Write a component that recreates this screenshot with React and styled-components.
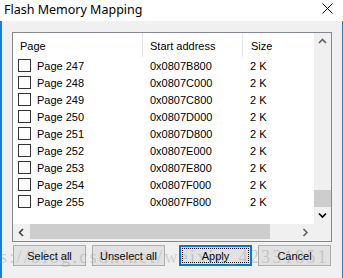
import React from "react";
import styled, { createGlobalStyle } from "styled-components";

const Global = createGlobalStyle`
  html, body { margin: 0; padding: 0; background: #f0f0f0; }
  body { width: 343px; height: 278px; overflow: hidden; }
`;

const Window = styled.div`
  position: relative;
  width: 343px;
  height: 278px;
  display: flex;
  flex-direction: column;
  background: #f0f0f0;
  font-family: "Liberation Sans", Arial, sans-serif;
  font-size: 11px;
  color: #000;
  overflow: hidden;
`;

const TitleBar = styled.div`
  height: 21px;
  flex: none;
  background: #fff;
  display: flex;
  align-items: center;
  justify-content: space-between;
  padding: 0 10px 0 4px;
`;

const Title = styled.div`
  font-family: "Noto Sans", "Noto Sans CJK SC", sans-serif;
  font-size: 12.5px;
  color: #000;
  line-height: 21px;
  margin-top: -3px;
`;

const Close = styled.svg`
  width: 11px;
  height: 11px;
  margin-top: -4px;
`;

const Body = styled.div`
  flex: 1;
  display: flex;
  flex-direction: column;
  border-left: 2px solid #1a82d6;
  border-right: 1px solid #1a82d6;
  padding: 11px 10px 0 10px;
`;

const ListBox = styled.div`
  height: 210px;
  box-sizing: border-box;
  border: 1px solid #828790;
  background: #fff;
  display: grid;
  grid-template-columns: 1fr 17px;
  grid-template-rows: 1fr 17px;
`;

const ListArea = styled.div`
  overflow: hidden;
`;

const Header = styled.div`
  height: 24px;
  display: grid;
  grid-template-columns: 130px 100px 1fr;
`;

const HeaderCell = styled.div`
  display: flex;
  align-items: center;
  padding-left: ${(p) => p.$pad}px;
  border-right: ${(p) => (p.$sep ? "1px solid #e5e5e5" : "none")};
  padding-top: 2px;
`;

const Row = styled.div`
  height: 17px;
  display: grid;
  grid-template-columns: 130px 100px 1fr;
  align-items: center;
`;

const Cell = styled.div`
  display: flex;
  align-items: center;
  padding-left: ${(p) => p.$pad}px;
  white-space: nowrap;
`;

const Check = styled.span`
  width: 13px;
  height: 13px;
  box-sizing: border-box;
  border: 1px solid #333;
  background: #fff;
  margin-right: 6px;
  flex: none;
`;

const VScroll = styled.div`
  background: #f0f0f0;
  display: flex;
  flex-direction: column;
`;

const HScroll = styled.div`
  background: #f0f0f0;
  display: flex;
`;

const Corner = styled.div`
  background: #f0f0f0;
`;

const ArrowBtn = styled.div`
  width: 17px;
  height: 17px;
  flex: none;
  display: flex;
  align-items: center;
  justify-content: center;
`;

const Track = styled.div`
  flex: 1;
  display: flex;
  flex-direction: ${(p) => (p.$vertical ? "column" : "row")};
`;

const VThumb = styled.div`
  height: 17px;
  background: #cdcdcd;
  margin-top: auto;
`;

const HThumb = styled.div`
  width: 240px;
  background: #cdcdcd;
  margin: 0 0 2px 0;
`;

const ButtonRow = styled.div`
  display: flex;
  justify-content: space-between;
  padding: 3px 1px 0 1px;
`;

const Group = styled.div`
  display: flex;
  gap: 6px;
`;

const Button = styled.div`
  position: relative;
  width: 73px;
  height: 21px;
  box-sizing: border-box;
  border: ${(p) => (p.$default ? "2px solid #0078d7" : "1px solid #adadad")};
  background: #e1e1e1;
  display: flex;
  align-items: center;
  justify-content: center;
  font-size: 11px;
  padding-top: 1px;
`;

const Focus = styled.span`
  position: absolute;
  inset: 1px;
  border: 1px dotted #000;
`;

const Watermark = styled.div`
  position: absolute;
  left: 0;
  top: 248px;
  font-family: "Liberation Serif", "Times New Roman", serif;
  font-size: 18px;
  line-height: 18px;
  letter-spacing: 2.3px;
  color: rgba(140, 140, 140, 0.35);
  white-space: nowrap;
  pointer-events: none;
`;

const Chevron = ({ dir, color = "#606060" }) => {
  const paths = {
    up: "M1 5 L4.5 1.5 L8 5",
    down: "M1 1.5 L4.5 5 L8 1.5",
    left: "M5 1 L1.5 4.5 L5 8",
    right: "M1.5 1 L5 4.5 L1.5 8",
  };
  const vertical = dir === "up" || dir === "down";
  return (
    <svg width={vertical ? 9 : 7} height={vertical ? 7 : 9} viewBox={vertical ? "0 0 9 7" : "0 0 7 9"}>
      <path d={paths[dir]} fill="none" stroke={color} strokeWidth="1.6" />
    </svg>
  );
};

const rows = Array.from({ length: 9 }, (_, i) => {
  const page = 247 + i;
  const addr = (0x08000000 + page * 0x800).toString(16).toUpperCase().padStart(8, "0");
  return { page, addr: "0x" + addr };
});

export default function App() {
  return (
    <>
      <Global />
      <Window>
        <TitleBar>
          <Title>Flash Memory Mapping</Title>
          <Close viewBox="0 0 11 11">
            <path d="M0.5 0.5 L10.5 10.5 M10.5 0.5 L0.5 10.5" stroke="#000" strokeWidth="1" />
          </Close>
        </TitleBar>
        <Body>
          <ListBox>
            <ListArea>
              <Header>
                <HeaderCell $pad={7} $sep>Page</HeaderCell>
                <HeaderCell $pad={7} $sep>Start address</HeaderCell>
                <HeaderCell $pad={8}>Size</HeaderCell>
              </Header>
              {rows.map((r) => (
                <Row key={r.page}>
                  <Cell $pad={5}>
                    <Check />
                    Page {r.page}
                  </Cell>
                  <Cell $pad={7}>{r.addr}</Cell>
                  <Cell $pad={7}>2 K</Cell>
                </Row>
              ))}
            </ListArea>
            <VScroll>
              <ArrowBtn>
                <Chevron dir="up" color="#606060" />
              </ArrowBtn>
              <Track $vertical>
                <VThumb />
              </Track>
              <ArrowBtn>
                <Chevron dir="down" color="#000" />
              </ArrowBtn>
            </VScroll>
            <HScroll>
              <ArrowBtn>
                <Chevron dir="left" color="#404040" />
              </ArrowBtn>
              <Track>
                <HThumb />
              </Track>
              <ArrowBtn>
                <Chevron dir="right" color="#606060" />
              </ArrowBtn>
            </HScroll>
            <Corner />
          </ListBox>
          <ButtonRow>
            <Group>
              <Button>Select all</Button>
              <Button>Unselect all</Button>
            </Group>
            <Group>
              <Button $default>
                <Focus />
                Apply
              </Button>
              <Button>Cancel</Button>
            </Group>
          </ButtonRow>
        </Body>
        <Watermark>s://blog.csdn.net/weixin_42331851</Watermark>
      </Window>
    </>
  );
}
